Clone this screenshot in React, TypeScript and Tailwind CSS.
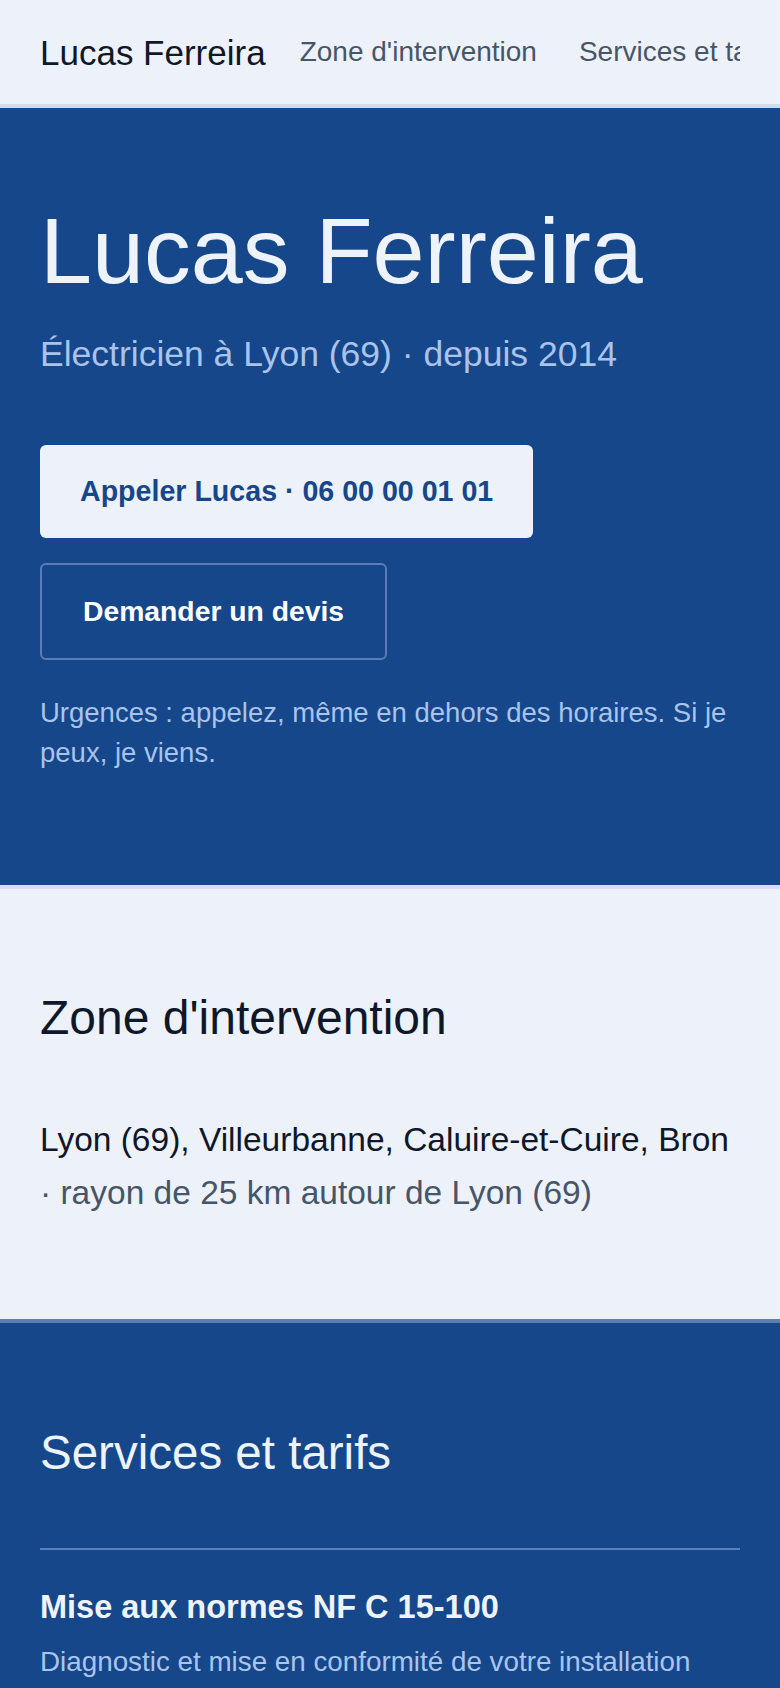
const font = { fontFamily: '"Liberation Sans", Arial, sans-serif' };

function Header() {
  return (
    <header className="h-[108px] border-b-4 border-[#d3dcea] bg-[#edf2fa] px-10">
      <div className="flex h-full items-center overflow-hidden whitespace-nowrap">
        <span className="shrink-0 text-[35px] leading-none text-[#0f172a]">
          Lucas Ferreira
        </span>
        <nav className="ml-[34px] flex gap-[42px] text-[28px] leading-none text-[#475569]">
          <a href="#zone">Zone d'intervention</a>
          <a href="#services">Services et tarifs</a>
          <a href="#contact">Contact</a>
        </nav>
      </div>
    </header>
  );
}

function Hero() {
  return (
    <section className="bg-[#15478a] px-10 pt-[96px] pb-[112px]">
      <h1 className="text-[93.5px] leading-none text-[#eef3fb]">
        Lucas Ferreira
      </h1>
      <p className="mt-[30px] text-[35.5px] leading-[52px] text-[#a9c3ea]">
        Électricien à Lyon (69) · depuis 2014
      </p>
      <div className="mt-[65px] flex flex-col items-start gap-[25px]">
        <a
          href="tel:0600000101"
          className="flex h-[93px] items-center rounded-md bg-[#edf2fa] px-10 text-[28.6px] font-bold text-[#15478a]"
        >
          Appeler Lucas · 06 00 00 01 01
        </a>
        <a
          href="#contact"
          className="flex h-[97px] items-center rounded-md border-2 border-[#5a7eb3] px-[41px] text-[28.3px] font-bold text-white"
        >
          Demander un devis
        </a>
      </div>
      <p className="mt-[33px] text-[27.5px] leading-[40px] text-[#a9c3ea]">
        Urgences : appelez, même en dehors des horaires. Si je peux, je viens.
      </p>
    </section>
  );
}

function Zone() {
  return (
    <section
      id="zone"
      className="border-t-4 border-[#d6deef] bg-[#edf2fa] px-10 pt-[100px] pb-[100px]"
    >
      <h2 className="text-[48px] leading-[58px] text-[#0f172a]">
        Zone d'intervention
      </h2>
      <p className="mt-[66px] text-[33.5px] leading-[53px]">
        <span className="text-[#0f172a]">
          Lyon (69), Villeurbanne, Caluire-et-Cuire, Bron
        </span>
        <span className="text-[#475569]"> · rayon de 25 km autour de Lyon (69)</span>
      </p>
    </section>
  );
}

function Services() {
  const items = [
    {
      title: "Mise aux normes NF C 15-100",
      desc: "Diagnostic et mise en conformité de votre installation électrique.",
    },
    {
      title: "Dépannage",
      desc: "Panne, disjoncteur qui saute, prise qui chauffe.",
    },
  ];

  return (
    <section
      id="services"
      className="border-t-4 border-[#5b7eb0] bg-[#15478a] px-10 pt-[101px] pb-24"
    >
      <h2 className="text-[47.5px] leading-[58px] text-[#eef3fb]">
        Services et tarifs
      </h2>
      <ul className="mt-[66px]">
        {items.map((item) => (
          <li key={item.title} className="border-t-2 border-[#5a80bc] pt-9 pb-9">
            <h3 className="text-[32.5px] font-bold leading-[42px] text-[#eef3fb]">
              {item.title}
            </h3>
            <p className="mt-[13px] text-[27.8px] leading-[42px] text-[#a9c5ee]">
              {item.desc}
            </p>
          </li>
        ))}
      </ul>
    </section>
  );
}

export default function App() {
  return (
    <div style={font} className="min-h-screen bg-[#edf2fa]">
      <Header />
      <Hero />
      <Zone />
      <Services />
    </div>
  );
}
